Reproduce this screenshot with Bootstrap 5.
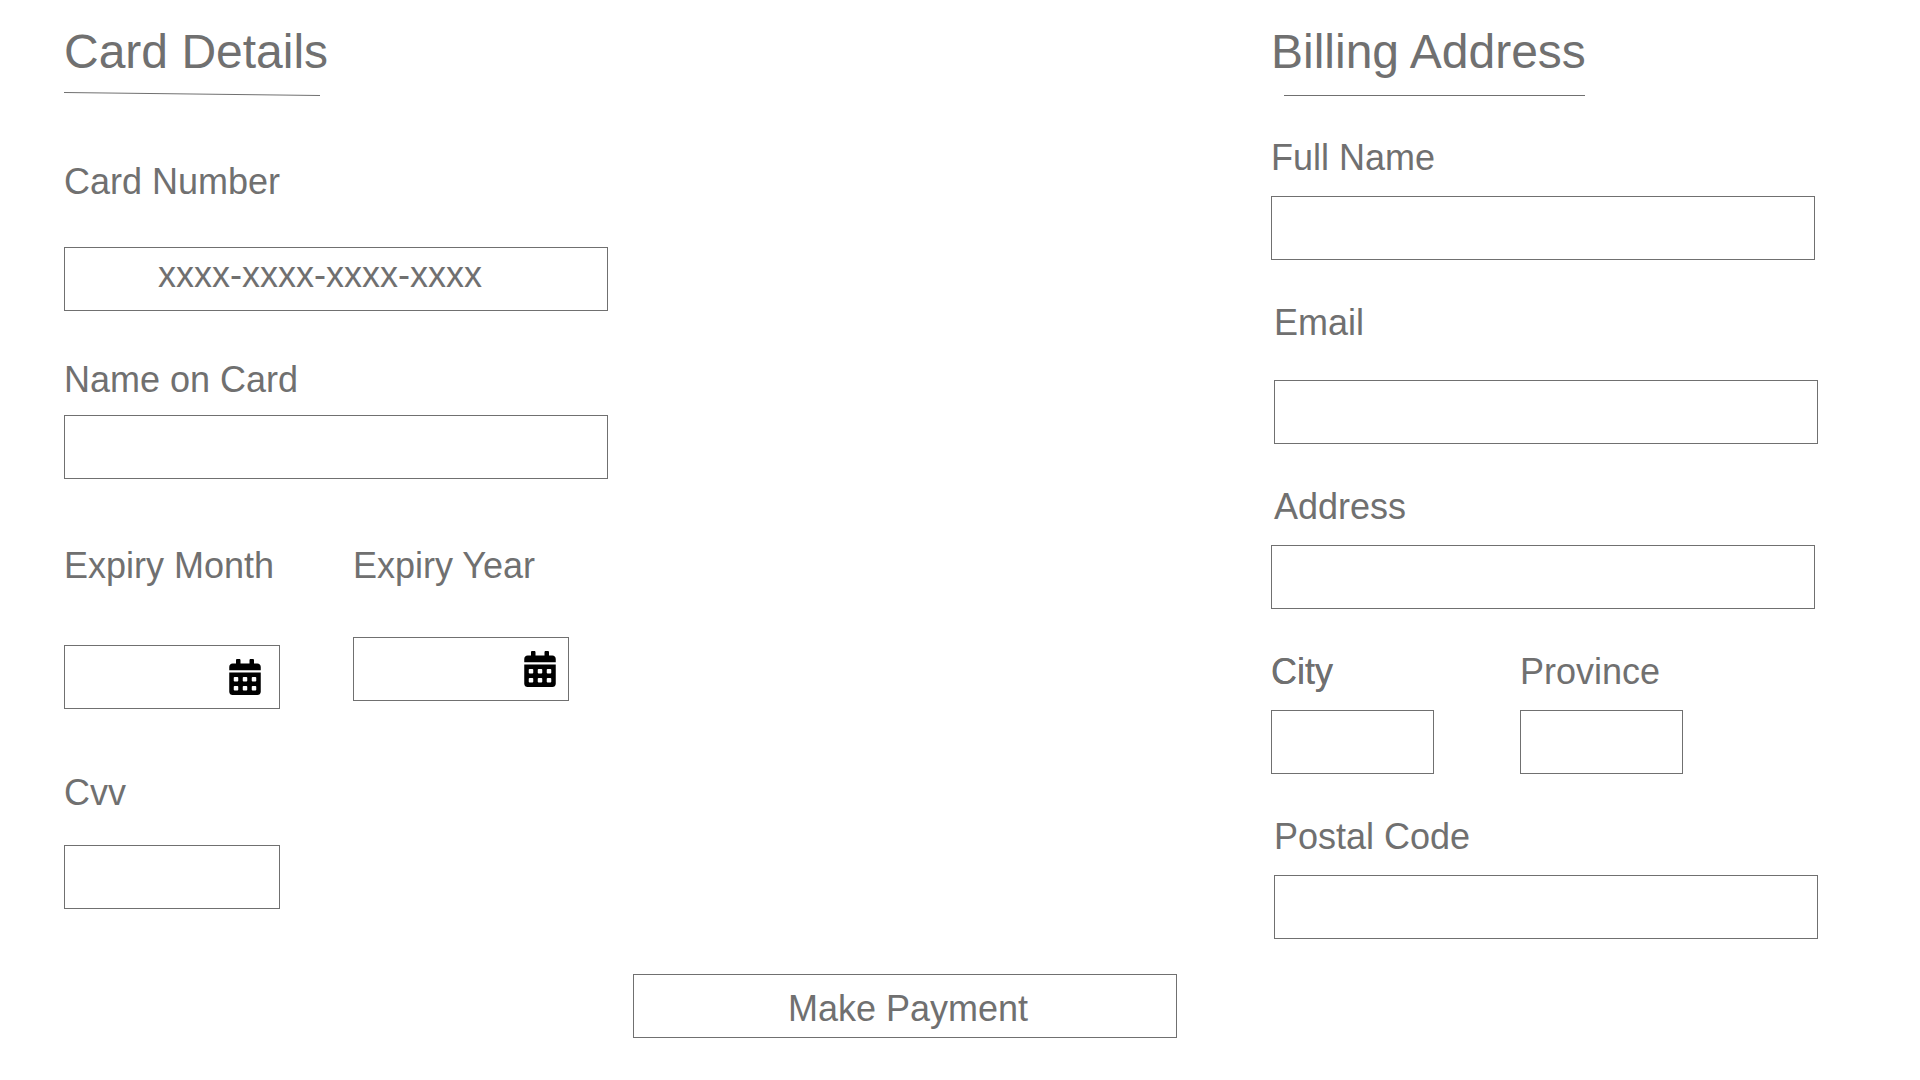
<!DOCTYPE html>
<html lang="en">
<head>
<meta charset="utf-8">
<meta name="viewport" content="width=device-width, initial-scale=1">
<title>Payment</title>
<link href="https://cdn.jsdelivr.net/npm/bootstrap@5.3.0/dist/css/bootstrap.min.css" rel="stylesheet">
<style>
  :root { --ink: #707070; }
  body { font-family: "Liberation Sans", Arial, sans-serif; color: var(--ink); background: #fff; }
  .pay-form { padding: 23px 102px 40px 64px; }
  .pay-column { flex: 0 1 547px; min-width: 0; }
  .pay-title { font-size: 48px; line-height: 58px; font-weight: 400; margin: 0; }
  .title-rule { display: block; height: 5px; margin-top: 10px; stroke: var(--ink); }
  .title-rule-inset { margin-left: 13px; }
  .field-label { display: block; font-size: 36px; line-height: 42px; margin: 0; white-space: nowrap; }
  .label-strong { text-shadow: 0 0 0 var(--ink); }
  .box, .form-control.box {
    width: 100%; max-width: 544px; height: 64px;
    border: 1px solid var(--ink); border-radius: 0; background: #fff;
    color: var(--ink); font-size: 36px; line-height: 40px; padding: 0 16px;
  }
  .form-control.box-number { padding: 0 16px 8px 93px; }
  .form-control.box::placeholder { color: var(--ink); opacity: 1; }
  .box-date { padding: 0 18px 0 0; }
  .box-date-tight { padding-right: 12px; }
  .box-date input { min-width: 0; height: 100%; outline: 0; background: transparent; color: inherit; padding: 0 12px; }
  .calendar-icon { width: 32px; height: 36px; flex: none; fill: #000; }
  .w-date { width: 216px; }
  .w-small { width: 163px; }
  .gap-dates { gap: 73px; }
  .gap-places { gap: 86px; }
  .shifted { margin-left: 3px; }
  /* vertical rhythm */
  .first-card { margin-top: 65px; }
  .first-billing { margin-top: 41px; }
  .after-number { margin-top: 48px; }
  .after-name { margin-top: 66px; }
  .after-dates { margin-top: 63px; }
  .billing-next { margin-top: 42px; }
  .under-14 { margin-bottom: 14px; }
  .under-17 { margin-bottom: 17px; }
  .under-31 { margin-bottom: 31px; }
  .under-36 { margin-bottom: 36px; }
  .under-44 { margin-bottom: 44px; }
  .under-50 { margin-bottom: 50px; }
  .under-58 { margin-bottom: 58px; }
  .pay-actions { margin-top: 35px; padding-right: 72px; }
  .btn.box { padding: 6px 0 0 6px; }
  .btn.box:hover { background: #f2f2f2; }
</style>
</head>
<body>
<svg class="d-none" aria-hidden="true">
  <symbol id="calendar" viewBox="0 0 448 512">
    <path d="M0 464c0 26.500 21.500 48 48 48h352c26.500 0 48-21.500 48-48V192H0v272zm320-196c0-6.600 5.400-12 12-12h40c6.600 0 12 5.400 12 12v40c0 6.600-5.400 12-12 12h-40c-6.600 0-12-5.400-12-12v-40zm0 128c0-6.600 5.400-12 12-12h40c6.600 0 12 5.400 12 12v40c0 6.600-5.400 12-12 12h-40c-6.600 0-12-5.400-12-12v-40zM192 268c0-6.600 5.400-12 12-12h40c6.600 0 12 5.400 12 12v40c0 6.600-5.400 12-12 12h-40c-6.600 0-12-5.400-12-12v-40zm0 128c0-6.600 5.400-12 12-12h40c6.600 0 12 5.400 12 12v40c0 6.600-5.400 12-12 12h-40c-6.600 0-12-5.400-12-12v-40zM64 268c0-6.600 5.400-12 12-12h40c6.600 0 12 5.400 12 12v40c0 6.600-5.400 12-12 12H76c-6.600 0-12-5.400-12-12v-40zm0 128c0-6.600 5.400-12 12-12h40c6.600 0 12 5.400 12 12v40c0 6.600-5.400 12-12 12H76c-6.600 0-12-5.400-12-12v-40zM400 64h-48V16c0-8.800-7.200-16-16-16h-32c-8.800 0-16 7.200-16 16v48H160V16c0-8.800-7.200-16-16-16h-32c-8.800 0-16 7.200-16 16v48H48C21.500 64 0 85.500 0 112v48h448v-48c0-26.500-21.500-48-48-48z"/>
  </symbol>
</svg>

<form class="pay-form">
  <div class="d-flex flex-wrap justify-content-between">

    <section class="pay-column">
      <h1 class="pay-title">Card Details</h1>
      <svg class="title-rule" width="256" viewBox="0 0 256 5" aria-hidden="true"><line x1="0" y1="1.500" x2="256" y2="4.500"/></svg>

      <div class="first-card">
        <label class="field-label under-44" for="number">Card Number</label>
        <input class="form-control box box-number" id="number" type="text" placeholder="xxxx-xxxx-xxxx-xxxx">
      </div>
      <div class="after-number">
        <label class="field-label under-14" for="holder">Name on Card</label>
        <input class="form-control box" id="holder" type="text">
      </div>
      <div class="d-flex align-items-start gap-dates after-name">
        <div class="w-date">
          <label class="field-label under-58" for="month">Expiry Month</label>
          <div class="box box-date d-flex align-items-center">
            <input class="border-0 flex-fill w-100" id="month" type="text">
            <svg class="calendar-icon" aria-hidden="true"><use href="#calendar"/></svg>
          </div>
        </div>
        <div class="w-date">
          <label class="field-label under-50" for="year">Expiry Year</label>
          <div class="box box-date box-date-tight d-flex align-items-center">
            <input class="border-0 flex-fill w-100" id="year" type="text">
            <svg class="calendar-icon" aria-hidden="true"><use href="#calendar"/></svg>
          </div>
        </div>
      </div>
      <div class="w-date after-dates">
        <label class="field-label under-31" for="cvv">Cvv</label>
        <input class="form-control box" id="cvv" type="text">
      </div>
    </section>

    <section class="pay-column">
      <h2 class="pay-title">Billing Address</h2>
      <svg class="title-rule title-rule-inset" width="301" viewBox="0 0 301 5" aria-hidden="true"><line x1="0" y1="4.500" x2="301" y2="4.500"/></svg>

      <div class="first-billing">
        <label class="field-label under-17" for="fullname">Full Name</label>
        <input class="form-control box" id="fullname" type="text">
      </div>
      <div class="billing-next shifted">
        <label class="field-label under-36" for="email">Email</label>
        <input class="form-control box" id="email" type="email">
      </div>
      <div class="billing-next">
        <label class="field-label under-17 shifted" for="address">Address</label>
        <input class="form-control box" id="address" type="text">
      </div>
      <div class="d-flex gap-places billing-next">
        <div class="w-small">
          <label class="field-label under-17 label-strong" for="city">City</label>
          <input class="form-control box" id="city" type="text">
        </div>
        <div class="w-small">
          <label class="field-label under-17" for="province">Province</label>
          <input class="form-control box" id="province" type="text">
        </div>
      </div>
      <div class="billing-next shifted">
        <label class="field-label under-17" for="postal">Postal Code</label>
        <input class="form-control box" id="postal" type="text">
      </div>
    </section>
  </div>

  <div class="pay-actions d-flex justify-content-center">
    <button class="btn box" type="submit">Make Payment</button>
  </div>
</form>
<script src="https://cdn.jsdelivr.net/npm/bootstrap@5.3.0/dist/js/bootstrap.bundle.min.js"></script>
</body>
</html>
